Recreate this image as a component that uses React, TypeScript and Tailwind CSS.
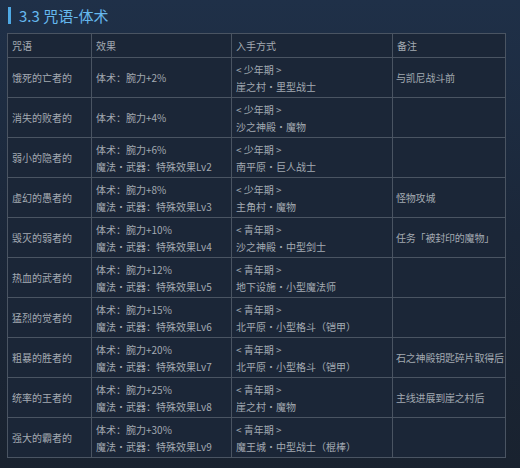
const rows: { name: string; effect: string[]; source: string[]; note: string }[] = [
  { name: '饿死的亡者的', effect: ['体术：腕力+2%'], source: ['< 少年期 >', '崖之村・里型战士'], note: '与凯尼战斗前' },
  { name: '消失的败者的', effect: ['体术：腕力+4%'], source: ['< 少年期 >', '沙之神殿・魔物'], note: '' },
  { name: '弱小的隐者的', effect: ['体术：腕力+6%', '魔法・武器：特殊效果Lv2'], source: ['< 少年期 >', '南平原・巨人战士'], note: '' },
  { name: '虚幻的愚者的', effect: ['体术：腕力+8%', '魔法・武器：特殊效果Lv3'], source: ['< 少年期 >', '主角村・魔物'], note: '怪物攻城' },
  { name: '毁灭的弱者的', effect: ['体术：腕力+10%', '魔法・武器：特殊效果Lv4'], source: ['< 青年期 >', '沙之神殿・中型剑士'], note: '任务「被封印的魔物」' },
  { name: '热血的武者的', effect: ['体术：腕力+12%', '魔法・武器：特殊效果Lv5'], source: ['< 青年期 >', '地下设施・小型魔法师'], note: '' },
  { name: '猛烈的觉者的', effect: ['体术：腕力+15%', '魔法・武器：特殊效果Lv6'], source: ['< 青年期 >', '北平原・小型格斗（铠甲）'], note: '' },
  { name: '粗暴的胜者的', effect: ['体术：腕力+20%', '魔法・武器：特殊效果Lv7'], source: ['< 青年期 >', '北平原・小型格斗（铠甲）'], note: '石之神殿钥匙碎片取得后' },
  { name: '统率的王者的', effect: ['体术：腕力+25%', '魔法・武器：特殊效果Lv8'], source: ['< 青年期 >', '崖之村・魔物'], note: '主线进展到崖之村后' },
  { name: '强大的霸者的', effect: ['体术：腕力+30%', '魔法・武器：特殊效果Lv9'], source: ['< 青年期 >', '魔王城・中型战士（棍棒）'], note: '' },
];

const cell = 'border border-[#4a5462] px-[4px] align-middle';

export default function App() {
  return (
    <div
      className="w-[520px] h-[468px] overflow-hidden bg-gradient-to-b from-[#1f3048] via-[#1b2739] to-[#19222f] pt-[7px] pl-[8px] text-[#a3aab2]"
      style={{ fontFamily: '"Noto Sans CJK SC", "Noto Sans", sans-serif' }}
    >
      <div className="flex items-center h-[17px]">
        <div className="w-[3px] h-[17px] bg-[#4fa9e4]" />
        <span className="ml-[8px] text-[15px] leading-[17px] text-[#66b8ee]">3.3 咒语-体术</span>
      </div>
      <table className="mt-[9px] -ml-[1px] border-collapse table-fixed w-[498px] text-[10px] leading-[17px] bg-[#1b2637]">
        <colgroup>
          <col className="w-[84px]" />
          <col className="w-[140px]" />
          <col className="w-[161px]" />
          <col className="w-[113px]" />
        </colgroup>
        <thead>
          <tr className="h-[24px]">
            <th className={`${cell} text-left font-normal`}>咒语</th>
            <th className={`${cell} text-left font-normal`}>效果</th>
            <th className={`${cell} text-left font-normal`}>入手方式</th>
            <th className={`${cell} text-left font-normal`}>备注</th>
          </tr>
        </thead>
        <tbody>
          {rows.map((r) => (
            <tr key={r.name} className="h-[40px]">
              <td className={cell}>{r.name}</td>
              <td className={cell}>
                {r.effect.map((e) => (
                  <div key={e}>{e}</div>
                ))}
              </td>
              <td className={cell}>
                {r.source.map((s) => (
                  <div key={s}>{s}</div>
                ))}
              </td>
              <td className={`${cell} whitespace-nowrap !pl-[3px] tracking-[-0.2px]`}>{r.note}</td>
            </tr>
          ))}
        </tbody>
      </table>
    </div>
  );
}
